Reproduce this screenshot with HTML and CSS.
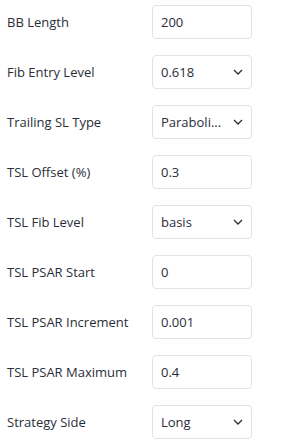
FILE: index.html
```html
<!DOCTYPE html>
<html lang="en">
<head>
  <meta charset="UTF-8">
  <meta name="viewport" content="width=device-width, initial-scale=1.0">
  <title>Strategy Inputs</title>
  <link rel="stylesheet" href="styles.css">
</head>
<body>
  <div class="form">
    <div class="row">
      <span class="label">BB Length</span>
      <div class="field">200</div>
    </div>
    <div class="row">
      <span class="label">Fib Entry Level</span>
      <div class="field select">
        <span class="value">0.618</span>
        <svg class="chevron" width="10" height="6" viewBox="0 0 10 6"><path d="M1 1l4 4 4-4" fill="none" stroke="#2a2e39" stroke-width="1.3"/></svg>
      </div>
    </div>
    <div class="row">
      <span class="label">Trailing SL Type</span>
      <div class="field select">
        <span class="value">Paraboli...</span>
        <svg class="chevron" width="10" height="6" viewBox="0 0 10 6"><path d="M1 1l4 4 4-4" fill="none" stroke="#2a2e39" stroke-width="1.3"/></svg>
      </div>
    </div>
    <div class="row">
      <span class="label">TSL Offset (%)</span>
      <div class="field">0.3</div>
    </div>
    <div class="row">
      <span class="label">TSL Fib Level</span>
      <div class="field select">
        <span class="value">basis</span>
        <svg class="chevron" width="10" height="6" viewBox="0 0 10 6"><path d="M1 1l4 4 4-4" fill="none" stroke="#2a2e39" stroke-width="1.3"/></svg>
      </div>
    </div>
    <div class="row">
      <span class="label">TSL PSAR Start</span>
      <div class="field">0</div>
    </div>
    <div class="row">
      <span class="label">TSL PSAR Increment</span>
      <div class="field">0.001</div>
    </div>
    <div class="row">
      <span class="label">TSL PSAR Maximum</span>
      <div class="field">0.4</div>
    </div>
    <div class="row">
      <span class="label">Strategy Side</span>
      <div class="field select">
        <span class="value">Long</span>
        <svg class="chevron" width="10" height="6" viewBox="0 0 10 6"><path d="M1 1l4 4 4-4" fill="none" stroke="#2a2e39" stroke-width="1.3"/></svg>
      </div>
    </div>
  </div>
</body>
</html>
```
FILE: styles.css
```css
body {
  margin: 0;
  background: #fff;
  font-family: "Open Sans", "DejaVu Sans", sans-serif;
  color: #2a2e39;
}

.form {
  display: flex;
  flex-direction: column;
  gap: 16px;
  padding: 5px 0 0 7px;
}

.row {
  display: flex;
  align-items: center;
  height: 34px;
}

.label {
  width: 145px;
  font-size: 13px;
}

.field {
  box-sizing: border-box;
  width: 100px;
  height: 34px;
  border: 1px solid #e0e3eb;
  border-radius: 4px;
  padding: 0 8px;
  display: flex;
  align-items: center;
  font-size: 13px;
}

.select {
  justify-content: space-between;
}

.chevron {
  display: block;
}
```
